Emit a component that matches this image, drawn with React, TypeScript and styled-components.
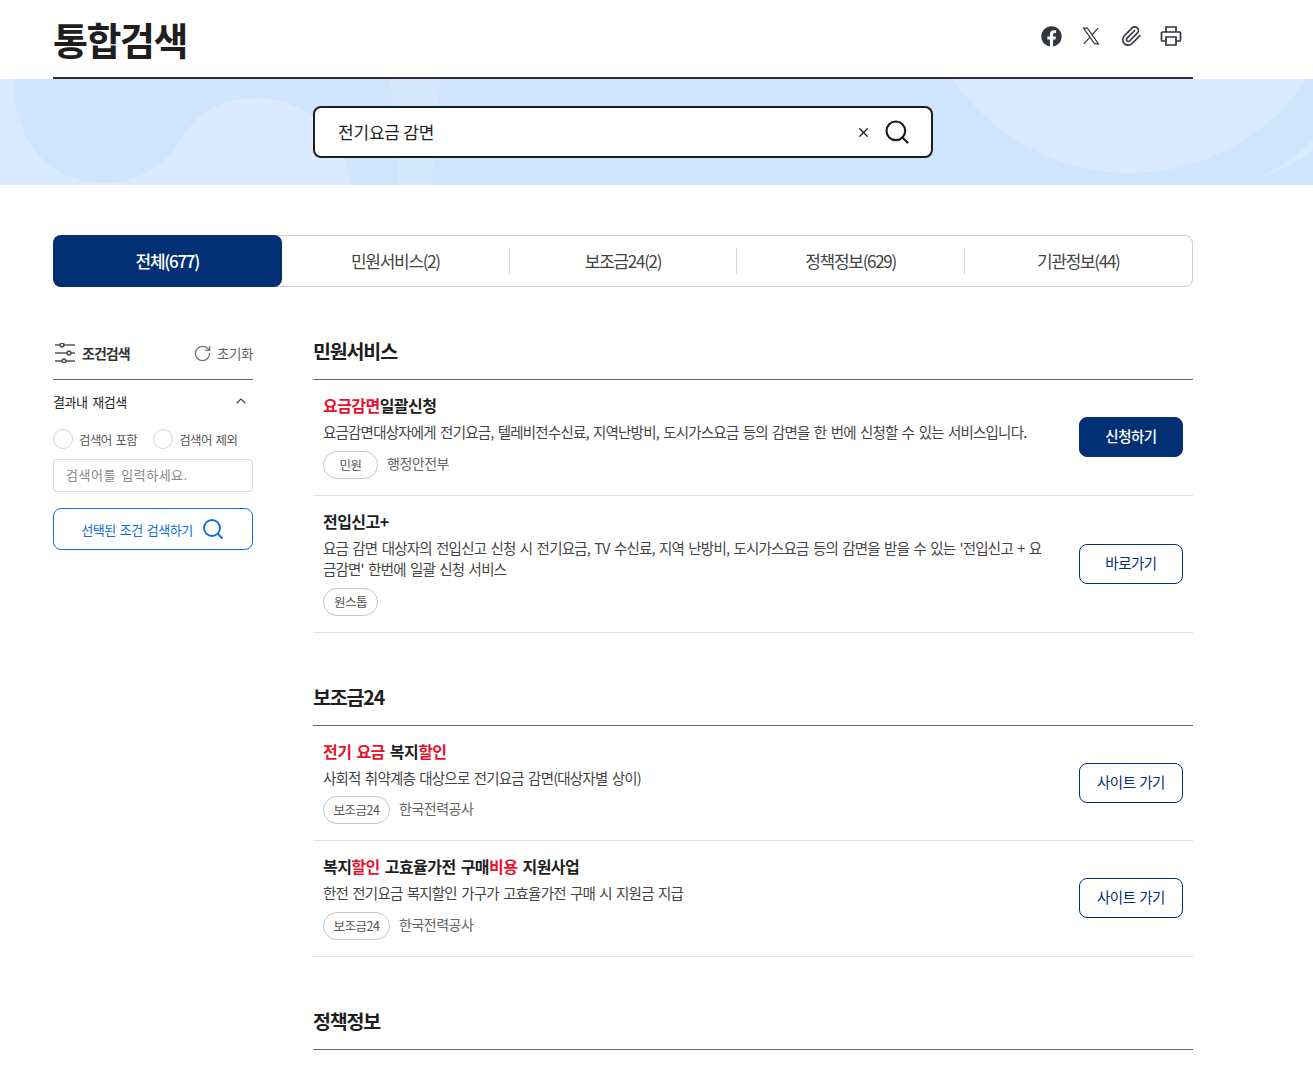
import React from "react";
import styled, { createGlobalStyle } from "styled-components";
import { FaFacebook } from "react-icons/fa";
import { Paperclip, Search, RotateCw, ChevronUp, X } from "lucide-react";

const Global = createGlobalStyle`
  html, body { margin: 0; padding: 0; background: #fff; }
  body { font-family: "Noto Sans CJK KR", "Noto Sans", sans-serif; color: #1e1e1e; }
  * { box-sizing: border-box; }
`;

const Page = styled.div`
  width: 1313px;
  height: 1073px;
  overflow: hidden;
`;
const Wrap = styled.div`
  width: 1140px;
  margin-left: 53px;
`;
const Header = styled(Wrap)`
  height: 79px;
  border-bottom: 2px solid #2f2f2f;
  display: flex;
  justify-content: space-between;
  align-items: flex-start;
`;
const Title = styled.h1`
  margin: 13px 0 0;
  font-size: 38px;
  line-height: 52px;
  font-weight: 700;
  letter-spacing: -1.5px;
  color: #1e1e1e;
`;
const Share = styled.div`
  display: flex;
  gap: 16px;
  margin: 24px 10px 0 0;
  color: #33363d;
`;
const ShareIcon = styled.span`
  width: 24px;
  height: 24px;
  display: flex;
  align-items: center;
  justify-content: center;
`;
const Banner = styled.div`
  position: relative;
  height: 106px;
  background: #cfe5fd;
  padding: 27px 0 0 313px;
  overflow: hidden;
`;
const BannerArt = styled.svg`
  position: absolute;
  inset: 0;
`;
const SearchBox = styled.div`
  position: relative;
  width: 620px;
  height: 52px;
  background: #fff;
  border: 2px solid #1e1e1e;
  border-radius: 8px;
  display: flex;
  align-items: center;
  padding: 0 20px 0 23px;
`;
const Query = styled.span`
  flex: 1;
  padding-bottom: 2px;
  font-size: 17px;
  letter-spacing: -0.2px;
  color: #1e1e1e;
`;
const Clear = styled(X)`
  margin-right: 12px;
  color: #1e1e1e;
`;
const Tabs = styled(Wrap)`
  margin-top: 50px;
  height: 52px;
  display: flex;
  border: 1px solid #cdcdcd;
  border-radius: 8px;
`;
const Tab = styled.div<{ $active?: boolean; $sep?: boolean }>`
  position: relative;
  flex: ${(p) => (p.$active ? "0 0 calc(20% + 1px)" : "1")};
  margin: ${(p) => (p.$active ? "-1px 0 -1px -1px" : "0")};
  padding-bottom: 2px;
  display: flex;
  align-items: center;
  justify-content: center;
  font-size: 17px;
  letter-spacing: -1.3px;
  color: ${(p) => (p.$active ? "#fff" : "#444")};
  font-weight: ${(p) => (p.$active ? 500 : 400)};
  background: ${(p) => (p.$active ? "#033075" : "transparent")};
  border-radius: ${(p) => (p.$active ? "8px" : "0")};
  &::after {
    content: "";
    display: ${(p) => (p.$sep ? "block" : "none")};
    position: absolute;
    right: -0.4px;
    top: 12px;
    bottom: 12px;
    width: 1px;
    background: #d5d5d5;
  }
`;
const Columns = styled(Wrap)`
  display: flex;
  gap: 60px;
  margin-top: 44px;
`;
const Side = styled.aside`
  width: 200px;
  flex: none;
  padding-top: 3px;
`;
const SideHead = styled.div`
  height: 46px;
  border-bottom: 1px solid #6a6a6a;
  display: flex;
  align-items: flex-start;
  justify-content: space-between;
  padding: 7px 0 0 2px;
`;
const SideTitle = styled.div`
  display: flex;
  align-items: center;
  gap: 7px;
  font-size: 14px;
  line-height: 24px;
  font-weight: 700;
  letter-spacing: -1px;
  color: #333;
`;
const Reset = styled.div`
  display: flex;
  align-items: center;
  gap: 5px;
  font-size: 13.5px;
  line-height: 24px;
  letter-spacing: -0.4px;
  color: #666;
`;
const ResetIcon = styled(RotateCw)`
  color: #777;
`;
const SideRow = styled.div`
  display: flex;
  align-items: center;
  justify-content: space-between;
  height: 20px;
  margin-top: 11px;
  font-size: 13px;
  letter-spacing: -0.4px;
  word-spacing: 2px;
  color: #222;
`;
const Chevron = styled(ChevronUp)`
  margin-right: 4px;
  color: #444;
`;
const Radios = styled.div`
  display: flex;
  gap: 16px;
  margin-top: 18px;
`;
const RadioLabel = styled.label`
  display: flex;
  align-items: center;
  gap: 6px;
  font-size: 12.5px;
  letter-spacing: -0.6px;
  word-spacing: 1.5px;
  color: #555;
`;
const RadioDot = styled.span`
  width: 20px;
  height: 20px;
  border: 1px solid #d5d5d5;
  border-radius: 50%;
  background: #fff;
`;
const SideInput = styled.div`
  height: 33px;
  margin-top: 10px;
  border: 1px solid #d8d8d8;
  border-radius: 4px;
  padding: 0 12px 3px;
  display: flex;
  align-items: center;
  font-size: 13px;
  letter-spacing: 0.5px;
  word-spacing: 2px;
  color: #888;
`;
const SideButton = styled.div`
  height: 42px;
  margin-top: 16px;
  border: 1px solid #0b6fdc;
  border-radius: 8px;
  display: flex;
  align-items: center;
  justify-content: center;
  gap: 8px;
  font-size: 13px;
  letter-spacing: -0.45px;
  word-spacing: 1.5px;
  color: #0b6fdc;
`;
const Main = styled.main`
  width: 880px;
`;
const Section = styled.section`
  margin-bottom: 44.1px;
`;
const SectionTitle = styled.h2`
  margin: 0;
  height: 49px;
  padding-top: 5px;
  border-bottom: 1px solid #6a6a6a;
  font-size: 19.5px;
  line-height: 29px;
  font-weight: 700;
  letter-spacing: -1.15px;
  color: #1e1e1e;
`;
const Item = styled.article`
  display: flex;
  align-items: center;
  gap: 30px;
  padding: 13px 10px 16px;
  border-bottom: 1px solid #e2e2e2;
`;
const ItemBody = styled.div`
  flex: 1;
  min-width: 0;
`;
const ItemTitle = styled.div`
  font-size: 16px;
  line-height: 24px;
  font-weight: 700;
  letter-spacing: -0.55px;
  word-spacing: 2px;
  color: #1e1e1e;
`;
const Mark = styled.span`
  color: #e8112d;
`;
const Desc = styled.p`
  margin: 4px 0 0;
  font-size: 14.5px;
  line-height: 21.5px;
  letter-spacing: -0.8px;
  word-spacing: 1.8px;
  color: #444;
`;
const Meta = styled.div`
  display: flex;
  align-items: center;
  gap: 9px;
  margin-top: 8px;
  font-size: 14px;
  letter-spacing: -0.5px;
  color: #666;
`;
const Org = styled.span`
  padding-bottom: 4px;
`;
const Chip = styled.span<{ $wide?: boolean }>`
  display: inline-flex;
  align-items: center;
  justify-content: center;
  width: ${(p) => (p.$wide ? "67px" : "55px")};
  height: 28px;
  padding-bottom: 1px;
  border: 1px solid #c9c9c9;
  border-radius: 14px;
  font-size: 12.5px;
  letter-spacing: -0.5px;
  color: #555;
`;
const Action = styled.div<{ $solid?: boolean }>`
  width: 104px;
  height: 40px;
  flex: none;
  margin-top: 3px;
  padding-bottom: 3px;
  display: flex;
  align-items: center;
  justify-content: center;
  border: 1px solid #033075;
  border-radius: 8px;
  font-size: 14.5px;
  letter-spacing: -0.5px;
  word-spacing: 1px;
  font-weight: ${(p) => (p.$solid ? 500 : 400)};
  color: ${(p) => (p.$solid ? "#fff" : "#033075")};
  background: ${(p) => (p.$solid ? "#033075" : "#fff")};
`;

const XLogo = () => (
  <svg width="20" height="20" viewBox="0 0 24 24" fill="none" stroke="currentColor" strokeWidth="1.4">
    <path d="M3 2.5h4.6L21 21.5h-4.6z" />
    <path d="M20.5 2.5 13.2 10.8M10.6 13.7 3.3 21.5" />
  </svg>
);

const PrinterBox = () => (
  <svg width="22" height="22" viewBox="0 0 22 22" fill="none" stroke="currentColor" strokeWidth="1.7">
    <path d="M6 7V2h10v5" />
    <path d="M6 16H2.5a1 1 0 0 1-1-1V8a1 1 0 0 1 1-1h17a1 1 0 0 1 1 1v7a1 1 0 0 1-1 1H16" />
    <path d="M6 12h10v8H6z" />
  </svg>
);

const Sliders = () => (
  <svg width="20" height="20" viewBox="0 0 20 20" fill="none" stroke="#555" strokeWidth="1.6">
    <path d="M0 2h5M9 2h11M0 10h12M16 10h4M0 18h7M11 18h9" />
    <circle cx="7" cy="2" r="1.9" />
    <circle cx="14" cy="10" r="1.9" />
    <circle cx="9" cy="18" r="1.9" />
  </svg>
);

type Row = {
  title: React.ReactNode;
  desc: string;
  chip?: string;
  org?: string;
  wide?: boolean;
  action: string;
  solid?: boolean;
};

const civil: Row[] = [
  {
    title: (<><Mark>요금감면</Mark>일괄신청</>),
    desc: "요금감면대상자에게 전기요금, 텔레비전수신료, 지역난방비, 도시가스요금 등의 감면을 한 번에 신청할 수 있는 서비스입니다.",
    chip: "민원",
    org: "행정안전부",
    action: "신청하기",
    solid: true,
  },
  {
    title: "전입신고+",
    desc: "요금 감면 대상자의 전입신고 신청 시 전기요금, TV 수신료, 지역 난방비, 도시가스요금 등의 감면을 받을 수 있는 '전입신고 + 요금감면' 한번에 일괄 신청 서비스",
    chip: "원스톱",
    action: "바로가기",
  },
];

const subsidy: Row[] = [
  {
    title: (<><Mark>전기 요금</Mark> 복지<Mark>할인</Mark></>),
    desc: "사회적 취약계층 대상으로 전기요금 감면(대상자별 상이)",
    chip: "보조금24",
    wide: true,
    org: "한국전력공사",
    action: "사이트 가기",
  },
  {
    title: (<>복지<Mark>할인</Mark> 고효율가전 구매<Mark>비용</Mark> 지원사업</>),
    desc: "한전 전기요금 복지할인 가구가 고효율가전 구매 시 지원금 지급",
    chip: "보조금24",
    wide: true,
    org: "한국전력공사",
    action: "사이트 가기",
  },
];

const Results = ({ rows }: { rows: Row[] }) => (
  <>
    {rows.map((r) => (
      <Item key={r.action + r.desc}>
        <ItemBody>
          <ItemTitle>{r.title}</ItemTitle>
          <Desc>{r.desc}</Desc>
          <Meta>
            <Chip $wide={r.wide}>{r.chip}</Chip>
            {r.org && <Org>{r.org}</Org>}
          </Meta>
        </ItemBody>
        <Action $solid={r.solid}>{r.action}</Action>
      </Item>
    ))}
  </>
);

export default function App() {
  return (
    <Page>
      <Global />
      <Header>
        <Title>통합검색</Title>
        <Share>
          <ShareIcon><FaFacebook size={21} /></ShareIcon>
          <ShareIcon><XLogo /></ShareIcon>
          <ShareIcon><Paperclip size={22} strokeWidth={1.8} /></ShareIcon>
          <ShareIcon><PrinterBox /></ShareIcon>
        </Share>
      </Header>
      <Banner>
        <BannerArt width="1313" height="106" viewBox="0 0 1313 106">
          <path d="M0 0H13C15 60 45 104 105 104C140 104 165 85 181 61C200 30 225 19 257 19C300 19 345 50 351 106H0Z" fill="#dbebff" />
          <path d="M389 0C396 35 399 70 398 106H431C436 70 437 30 440 0Z" fill="#d5e8fe" />
          <circle cx="1130" cy="-119.6" r="213.6" fill="#d9eaff" />
          <path d="M1260 98C1280 88 1300 76 1313 60V72C1295 85 1280 92 1260 98Z" fill="#d9eaff" />
        </BannerArt>
        <SearchBox>
          <Query>전기요금 감면</Query>
          <Clear size={15} strokeWidth={2} />
          <Search size={28} strokeWidth={1.9} />
        </SearchBox>
      </Banner>
      <Tabs>
        <Tab $active>전체(677)</Tab>
        <Tab $sep>민원서비스(2)</Tab>
        <Tab $sep>보조금24(2)</Tab>
        <Tab $sep>정책정보(629)</Tab>
        <Tab>기관정보(44)</Tab>
      </Tabs>
      <Columns>
        <Side>
          <SideHead>
            <SideTitle><Sliders />조건검색</SideTitle>
            <Reset><ResetIcon size={19} strokeWidth={1.7} />초기화</Reset>
          </SideHead>
          <SideRow>결과내 재검색<Chevron size={16} strokeWidth={1.6} /></SideRow>
          <Radios>
            <RadioLabel><RadioDot />검색어 포함</RadioLabel>
            <RadioLabel><RadioDot />검색어 제외</RadioLabel>
          </Radios>
          <SideInput>검색어를 입력하세요.</SideInput>
          <SideButton>선택된 조건 검색하기<Search size={24} strokeWidth={1.9} /></SideButton>
        </Side>
        <Main>
          <Section>
            <SectionTitle>민원서비스</SectionTitle>
            <Results rows={civil} />
          </Section>
          <Section>
            <SectionTitle>보조금24</SectionTitle>
            <Results rows={subsidy} />
          </Section>
          <Section>
            <SectionTitle>정책정보</SectionTitle>
          </Section>
        </Main>
      </Columns>
    </Page>
  );
}
